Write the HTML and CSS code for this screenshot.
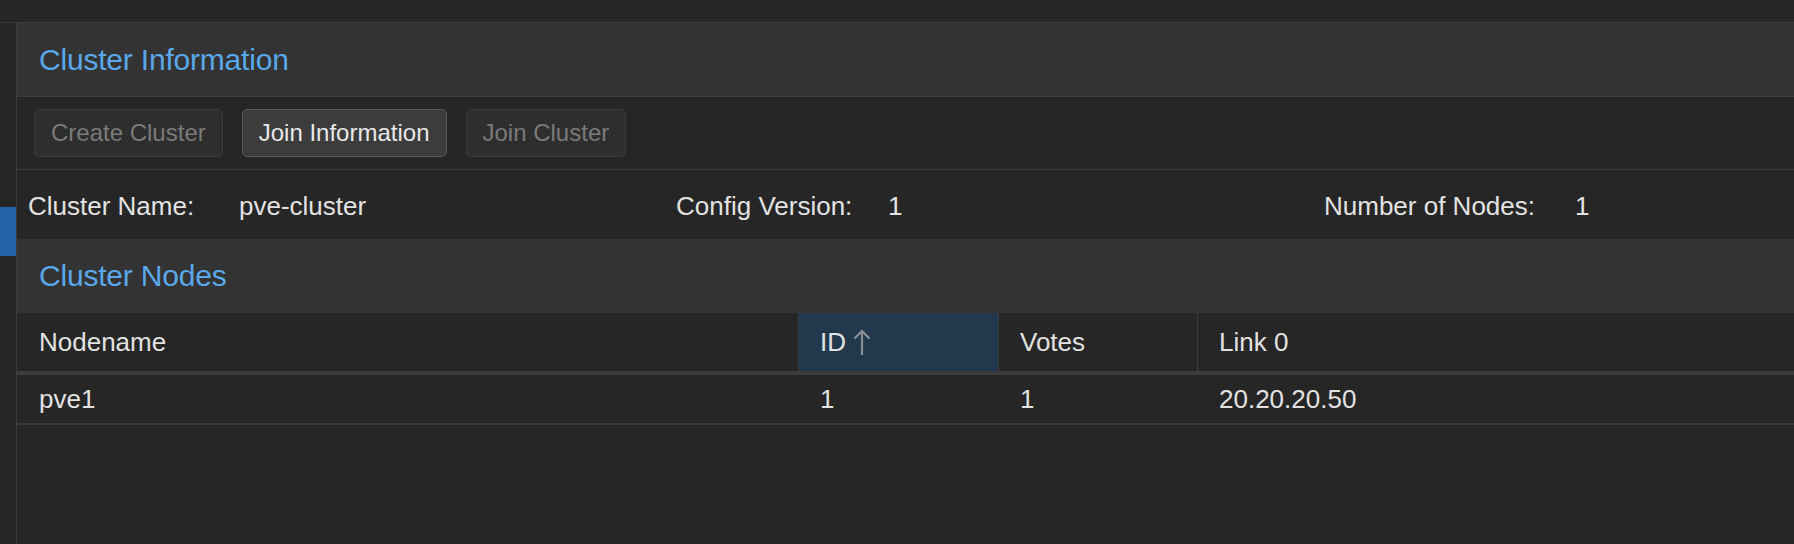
FILE: index.html
```html
<!DOCTYPE html>
<html>
<head>
<meta charset="utf-8">
<link rel="stylesheet" href="styles.css">
</head>
<body>
<div class="topbar"></div>
<div class="main">
  <div class="sidebar"><div class="sel"></div></div>
  <div class="content">
    <div class="panel-header"><span class="title">Cluster Information</span></div>
    <div class="toolbar">
      <button class="btn disabled">Create Cluster</button>
      <button class="btn">Join Information</button>
      <button class="btn disabled">Join Cluster</button>
    </div>
    <div class="info">
      <div class="field f1"><span class="label">Cluster Name:</span><span class="value">pve-cluster</span></div>
      <div class="field f2"><span class="label">Config Version:</span><span class="value">1</span></div>
      <div class="field f3"><span class="label">Number of Nodes:</span><span class="value">1</span></div>
    </div>
    <div class="panel-header nodes-header"><span class="title">Cluster Nodes</span></div>
    <div class="grid-header">
      <div class="col c-name">Nodename</div>
      <div class="col c-id sorted">ID
        <svg class="sort-arrow" width="18" height="27" viewBox="0 0 18 27"><path d="M9 26V2M1.5 9.5L9 2l7.5 7.5" fill="none" stroke="#8a8f95" stroke-width="2.2"/></svg>
      </div>
      <div class="col c-votes">Votes</div>
      <div class="col c-link">Link 0</div>
    </div>
    <div class="grid-row">
      <div class="col c-name">pve1</div>
      <div class="col c-id">1</div>
      <div class="col c-votes">1</div>
      <div class="col c-link">20.20.20.50</div>
    </div>
    <div class="grid-empty"></div>
  </div>
</div>
</body>
</html>
```
FILE: styles.css
```css
html, body {
  margin: 0;
  height: 100%;
  background: #262626;
  overflow: hidden;
}
body {
  font-family: "Liberation Sans", Arial, sans-serif;
  color: #e2e2e2;
}
.topbar {
  height: 22px;
  background: #272727;
  border-bottom: 1px solid #3b3b3b;
}
.main {
  display: flex;
  height: 521px;
}
.sidebar {
  flex: 0 0 16px;
  background: #262626;
  border-right: 1px solid #3b3b3b;
  padding-top: 184px;
}
.sel {
  height: 49px;
  background: #2262a6;
}
.content {
  flex: 1;
  min-width: 0;
  display: flex;
  flex-direction: column;
  background: #262626;
}
.panel-header {
  height: 73px;
  background: #333333;
  border-bottom: 1px solid #3d3d3d;
  display: flex;
  align-items: center;
  padding-left: 22px;
}
.title {
  font-size: 30px;
  color: #5aa7e9;
  letter-spacing: -0.2px;
}
.toolbar {
  height: 73px;
  box-sizing: border-box;
  display: flex;
  align-items: center;
  gap: 19px;
  padding-left: 17px;
  border-bottom: 1px solid #3d3d3d;
}
.btn {
  font-family: inherit;
  font-size: 24px;
  height: 48px;
  padding: 0 16px;
  border-radius: 5px;
  background: #3c3c3c;
  border: 1px solid #575757;
  color: #e8e8e8;
}
.btn.disabled {
  background: #2e2e2e;
  border-color: #3c3c3c;
  color: #7a7a7a;
}
.info {
  height: 69px;
  box-sizing: border-box;
  padding-top: 4px;
  display: flex;
  align-items: center;
  padding-left: 11px;
  font-size: 26px;
}
.field {
  display: flex;
  flex: 0 0 648px;
}
.f3 { flex: 1; }
.f1 .label { width: 211px; }
.f2 .label { width: 212px; }
.f3 .label { width: 251px; }
.nodes-header {
  height: 74px;
  border-bottom: none;
}
.grid-header, .grid-row {
  display: flex;
  font-size: 26px;
}
.grid-header {
  height: 58px;
  border-bottom: 4px solid #3c3c3c;
}
.grid-row {
  height: 48px;
  border-bottom: 2px solid #3a3a3a;
}
.col {
  display: flex;
  align-items: center;
  padding-left: 21px;
  box-sizing: border-box;
}
.grid-header .col + .col {
  border-left: 1px solid #3e3e3e;
}
.grid-row .col + .col {
  border-left: 1px solid transparent;
}
.c-name { flex: 0 0 781px; padding-left: 22px; }
.c-id { flex: 0 0 200px; }
.c-votes { flex: 0 0 199px; }
.c-link { flex: 1; }
.sorted {
  background: #22384d;
}
.sort-arrow {
  margin-left: 7px;
  margin-top: 1px;
}
.grid-empty {
  flex: 1;
}
```
